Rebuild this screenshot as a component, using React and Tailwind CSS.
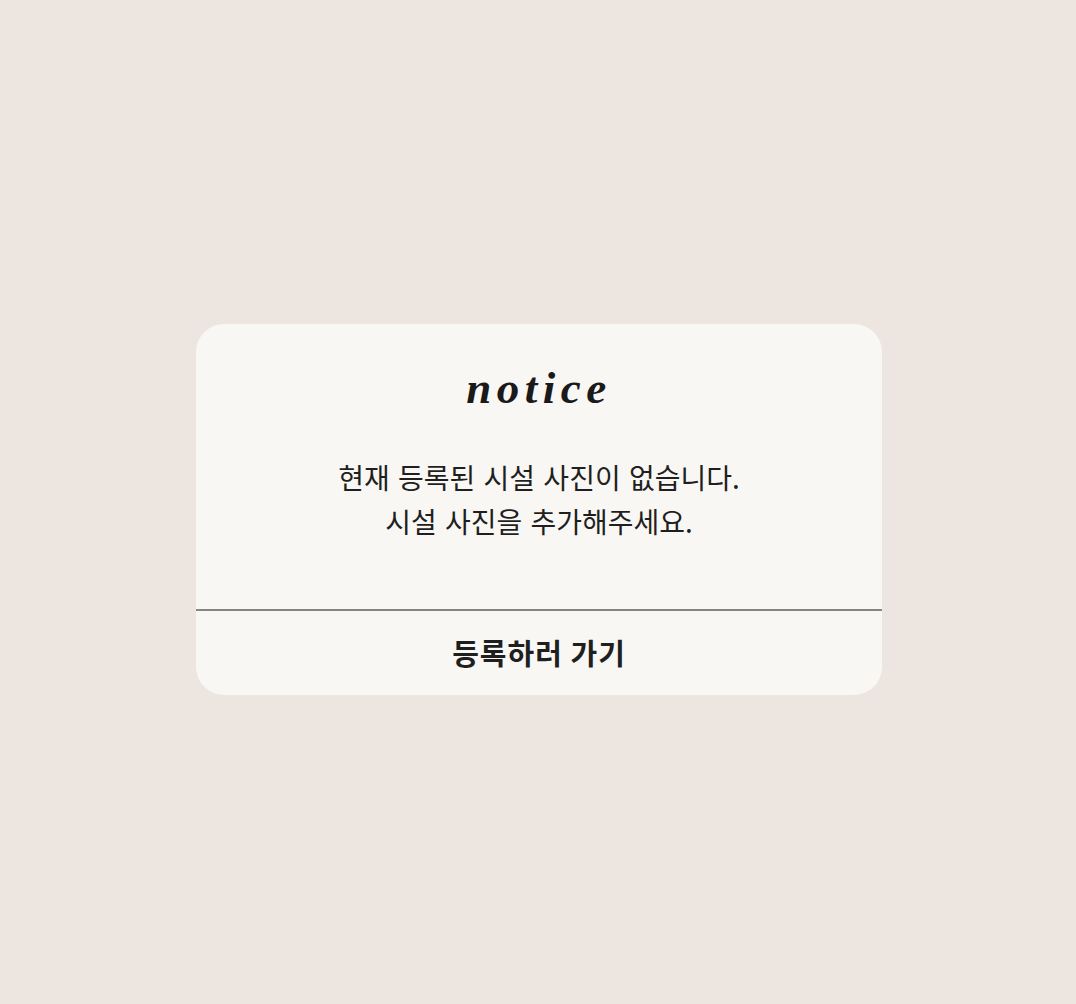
export default function App() {
  return (
    <div className="min-h-screen w-full bg-[#ede5e0] flex items-center justify-center pt-[14px] pl-[2px]">
      <div className="w-[686px] bg-[#f9f7f4] rounded-[28px] overflow-hidden flex flex-col">
        <div className="flex flex-col items-center pt-[38px] pb-[66px]">
          <h2 className="font-['Liberation_Serif',serif] italic font-bold text-[45px] leading-[52px] tracking-[5.5px] text-[#1a1a1a]">
            notice
          </h2>
          <p className="mt-[41px] text-center font-['Noto_Sans_CJK_KR',sans-serif] text-[28px] leading-[44px] text-[#1f1f1f] tracking-[0px] [word-spacing:2px]">
            현재 등록된 시설 사진이 없습니다.
            <br />
            시설 사진을 추가해주세요.
          </p>
        </div>
        <button className="h-[86px] border-t-2 border-[#858585] flex items-center justify-center font-['Noto_Sans_CJK_KR',sans-serif] font-bold text-[29px] tracking-[1px] text-[#1f1f1f]">
          등록하러 가기
        </button>
      </div>
    </div>
  );
}
